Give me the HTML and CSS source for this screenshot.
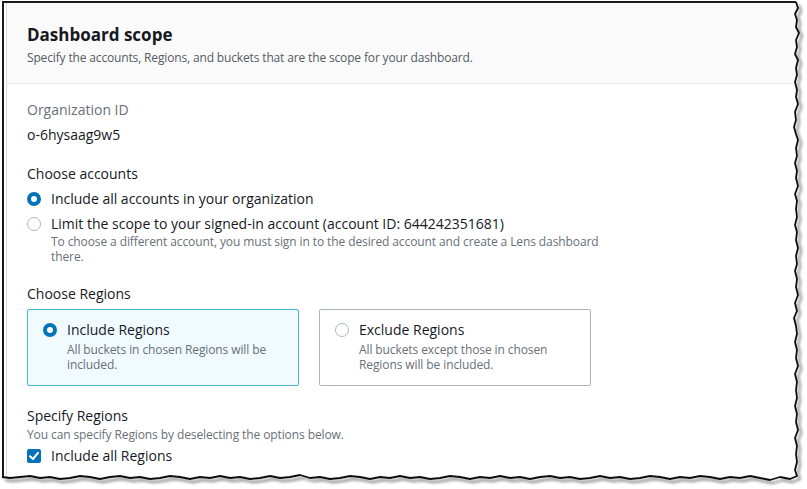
FILE: index.html
```html
<!DOCTYPE html>
<html>
<head>
<meta charset="utf-8">
<link rel="stylesheet" href="styles.css">
</head>
<body>
<div class="shot">
  <div class="frame">
    <div class="container">
      <div class="header">
        <h2 class="title">Dashboard scope</h2>
        <p class="subtitle">Specify the accounts, Regions, and buckets that are the scope for your dashboard.</p>
      </div>
      <div class="content">
        <div class="field">
          <div class="label-gray">Organization ID</div>
          <div class="value">o-6hysaag9w5</div>
        </div>
        <div class="field">
          <div class="label">Choose accounts</div>
          <div class="radio-row">
            <span class="radio checked"></span>
            <div class="radio-text">
              <div class="radio-label">Include all accounts in your organization</div>
            </div>
          </div>
          <div class="radio-row">
            <span class="radio"></span>
            <div class="radio-text">
              <div class="radio-label">Limit the scope to your signed-in account (account ID: 644242351681)</div>
              <div class="desc narrow">To choose a different account, you must sign in to the desired account and create a Lens dashboard there.</div>
            </div>
          </div>
        </div>
        <div class="field regions">
          <div class="label">Choose Regions</div>
          <div class="tiles">
            <div class="tile selected">
              <span class="radio checked"></span>
              <div class="radio-text">
                <div class="radio-label">Include Regions</div>
                <div class="desc">All buckets in chosen Regions will be included.</div>
              </div>
            </div>
            <div class="tile">
              <span class="radio"></span>
              <div class="radio-text">
                <div class="radio-label">Exclude Regions</div>
                <div class="desc">All buckets except those in chosen Regions will be included.</div>
              </div>
            </div>
          </div>
        </div>
        <div class="field specify">
          <div class="label tight">Specify Regions</div>
          <div class="desc">You can specify Regions by deselecting the options below.</div>
          <div class="check-row">
            <span class="checkbox"><svg viewBox="0 0 14 14" width="14" height="14"><path d="M3 7.2 L6 10 L11 3.8" fill="none" stroke="#fff" stroke-width="2" stroke-linecap="round" stroke-linejoin="round"/></svg></span>
            <span class="radio-label">Include all Regions</span>
          </div>
        </div>
      </div>
    </div>
  </div>
  <svg class="torn" viewBox="0 0 807 489" width="807" height="489">
    <defs>
      <filter id="sh" x="-5%" y="-5%" width="110%" height="110%">
        <feGaussianBlur in="SourceAlpha" stdDeviation="1.6"/>
        <feOffset dx="2.5" dy="2.5" result="b"/>
        <feComponentTransfer><feFuncA type="linear" slope="0.55"/></feComponentTransfer>
        <feMerge><feMergeNode/><feMergeNode in="SourceGraphic"/></feMerge>
      </filter>
    </defs>
    <path fill="#fff" d="M807,0 L796,0 L796,2 L798,8 L795,14 L797,20 L796,27 L799,33 L796,40 L797,47 L795,54 L798,60 L796,68 L797,75 L795,82 L797,90 L796,97 L798,104 L795,112 L796,120 L794,127 L796,134 L798,140 L796,148 L797,156 L795,163 L797,171 L796,178 L798,186 L795,194 L797,201 L796,209 L797,217 L795,225 L797,232 L796,240 L798,248 L796,256 L797,264 L795,271 L797,279 L796,287 L798,295 L795,303 L797,311 L794,318 L796,326 L797,334 L795,342 L797,350 L796,358 L798,366 L795,374 L797,382 L796,390 L797,398 L795,406 L797,414 L796,422 L798,430 L795,438 L797,446 L796,454 L797,462 L795,470 L797,476 L790,479 L780,477 L770,480 L760,478 L750,476 L740,478 L730,477 L720,479 L710,477 L700,476 L690,478 L680,477 L670,479 L660,477 L650,476 L640,478 L630,479 L620,477 L610,478 L600,476 L590,478 L580,479 L570,477 L560,478 L550,476 L540,477 L530,479 L520,477 L510,478 L500,476 L490,478 L480,477 L470,479 L460,477 L450,476 L440,478 L430,479 L420,477 L410,478 L400,476 L390,478 L380,477 L370,479 L360,477 L350,476 L340,478 L330,479 L320,477 L310,478 L300,475 L290,477 L280,478 L270,476 L260,478 L250,479 L240,477 L230,478 L220,476 L210,478 L200,477 L190,479 L180,477 L170,476 L160,478 L150,479 L140,477 L130,478 L120,476 L110,477 L100,479 L90,477 L80,476 L70,478 L60,479 L50,477 L40,478 L30,476 L20,477 L10,478 L2,477 L0,477 L0,489 L807,489 Z"/>
    <path fill="none" stroke="#111" stroke-width="1.8" stroke-linejoin="round" filter="url(#sh)" d="M796,2 L798,8 L795,14 L797,20 L796,27 L799,33 L796,40 L797,47 L795,54 L798,60 L796,68 L797,75 L795,82 L797,90 L796,97 L798,104 L795,112 L796,120 L794,127 L796,134 L798,140 L796,148 L797,156 L795,163 L797,171 L796,178 L798,186 L795,194 L797,201 L796,209 L797,217 L795,225 L797,232 L796,240 L798,248 L796,256 L797,264 L795,271 L797,279 L796,287 L798,295 L795,303 L797,311 L794,318 L796,326 L797,334 L795,342 L797,350 L796,358 L798,366 L795,374 L797,382 L796,390 L797,398 L795,406 L797,414 L796,422 L798,430 L795,438 L797,446 L796,454 L797,462 L795,470 L797,476 L790,479 L780,477 L770,480 L760,478 L750,476 L740,478 L730,477 L720,479 L710,477 L700,476 L690,478 L680,477 L670,479 L660,477 L650,476 L640,478 L630,479 L620,477 L610,478 L600,476 L590,478 L580,479 L570,477 L560,478 L550,476 L540,477 L530,479 L520,477 L510,478 L500,476 L490,478 L480,477 L470,479 L460,477 L450,476 L440,478 L430,479 L420,477 L410,478 L400,476 L390,478 L380,477 L370,479 L360,477 L350,476 L340,478 L330,479 L320,477 L310,478 L300,475 L290,477 L280,478 L270,476 L260,478 L250,479 L240,477 L230,478 L220,476 L210,478 L200,477 L190,479 L180,477 L170,476 L160,478 L150,479 L140,477 L130,478 L120,476 L110,477 L100,479 L90,477 L80,476 L70,478 L60,479 L50,477 L40,478 L30,476 L20,477 L10,478 L2,477"/>
  </svg>
</div>
</body>
</html>
```

FILE: styles.css
```css
* { box-sizing: border-box; }
html, body { margin: 0; padding: 0; background: #fff; }
body { font-family: "Open Sans", "Noto Sans", sans-serif; color: #16191f; }

.shot {
  position: relative;
  width: 807px;
  height: 489px;
  overflow: hidden;
  background: #fff;
}

.frame {
  margin: 1px 0 0 2px;
  width: 805px;
  height: 488px;
  border-left: 2px solid #1a1a1a;
  border-top: 2px solid #1a1a1a;
  padding-left: 2px;
}

.container {
  height: 100%;
  border-left: 1px solid #d5dbdb;
  background: #fff;
}

.header {
  background: #fafafa;
  border-bottom: 1px solid #eaeded;
  padding: 21px 20px 0 20px;
  height: 81px;
}

.title {
  margin: 0;
  font-size: 17px;
  font-weight: 700;
  line-height: 22px;
  color: #16191f;
}

.subtitle {
  margin: 4px 0 0 0;
  font-size: 12px;
  letter-spacing: -0.15px;
  line-height: 16px;
  color: #545b64;
}

.content {
  padding: 16px 20px 0 20px;
}

.field { margin-bottom: 19px; }
.field.regions { margin-top: 20px; }
.field.specify { margin-top: 20px; }

.label-gray {
  font-size: 14px;
  line-height: 20px;
  color: #687078;
}

.value {
  margin-top: 5px;
  font-size: 14px;
  line-height: 20px;
}

.label {
  font-size: 14px;
  line-height: 20px;
  margin-bottom: 5px;
}

.label.tight { margin-bottom: 1px; }

.radio-row {
  display: flex;
  align-items: flex-start;
  gap: 10px;
  margin-bottom: 5px;
}

.radio {
  flex: none;
  width: 14px;
  height: 14px;
  border-radius: 50%;
  border: 1.5px solid #aab7b8;
  background: #fff;
  margin-top: 3px;
}

.radio.checked {
  border: 4px solid #0073bb;
}

.radio-label {
  font-size: 14px;
  line-height: 20px;
}

.desc {
  font-size: 12px;
  letter-spacing: -0.1px;
  line-height: 15px;
  color: #687078;
}

.desc.narrow { max-width: 556px; }

.tiles {
  display: flex;
  gap: 20px;
}

.tile {
  width: 272px;
  height: 77px;
  border: 1px solid #aab7b8;
  border-radius: 2px;
  display: flex;
  gap: 10px;
  padding: 10px 12px 0 15px;
}

.tile.selected {
  background: #f1faff;
  border-color: #44b9d6;
}

.tile .radio-text { width: 214px; }
.tile .desc { margin-top: 2px; }

.check-row {
  display: flex;
  align-items: center;
  gap: 10px;
  margin-top: 4px;
}

.checkbox {
  width: 14px;
  height: 14px;
  border-radius: 2px;
  background: #0073bb;
  display: flex;
}

.torn {
  position: absolute;
  left: 0;
  top: 0;
}
```
